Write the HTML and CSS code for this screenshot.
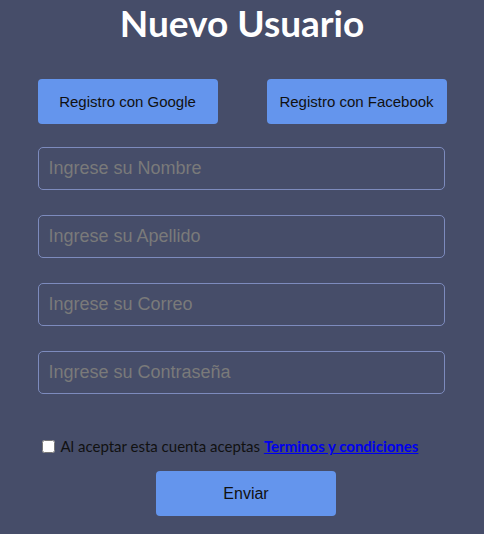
FILE: index.html
```html
<!DOCTYPE html>
<html lang="es">
<head>
<meta charset="utf-8">
<title>Nuevo Usuario</title>
<link rel="stylesheet" href="styles.css">
</head>
<body>
<main class="page">
  <h1 class="title">Nuevo Usuario</h1>
  <div class="social">
    <button class="btn">Registro con Google</button>
    <button class="btn">Registro con Facebook</button>
  </div>
  <form class="form">
    <input class="field" type="text" placeholder="Ingrese su Nombre">
    <input class="field" type="text" placeholder="Ingrese su Apellido">
    <input class="field" type="email" placeholder="Ingrese su Correo">
    <input class="field" type="password" placeholder="Ingrese su Contraseña">
    <label class="terms"><input class="check" type="checkbox">Al aceptar esta cuenta aceptas <a class="link" href="#">Terminos y condiciones</a></label>
    <button class="btn submit" type="button">Enviar</button>
  </form>
</main>
</body>
</html>
```
FILE: styles.css
```css
html, body {
  margin: 0;
  padding: 0;
  background: #464d69;
  height: 100%;
}
.page {
  width: 409px;
  margin: 0 auto;
  display: flex;
  flex-direction: column;
}
.title {
  margin: 0;
  padding-top: 1px;
  height: 45px;
  text-align: center;
  color: #ffffff;
  font-family: Lato, "Open Sans", sans-serif;
  font-weight: 700;
  font-size: 37px;
  line-height: 44px;
}
.social {
  display: flex;
  justify-content: space-between;
  margin-top: 33px;
}
.btn {
  width: 180px;
  height: 45px;
  border: none;
  border-radius: 4px;
  background: #6495ed;
  color: #111111;
  font-family: "Liberation Sans", Arial, sans-serif;
  font-size: 15px;
  padding: 0;
}
.form {
  display: flex;
  flex-direction: column;
  margin-top: 23px;
}
.field {
  box-sizing: border-box;
  width: 407px;
  height: 43px;
  margin-bottom: 25px;
  padding: 0 10px;
  background: transparent;
  border: 1px solid #7d8bbd;
  border-radius: 5px;
  font-family: "Liberation Sans", Arial, sans-serif;
  font-size: 18px;
  color: #dddddd;
}
.field::placeholder {
  color: #7a7a7a;
}
.terms {
  margin-top: 18px;
  padding-left: 4px;
  display: flex;
  align-items: center;
  font-family: Lato, "Open Sans", sans-serif;
  font-size: 15px;
  color: #111111;
  white-space: pre;
}
.check {
  margin: 0 6px 0 0;
  width: 13px;
  height: 13px;
}
.link {
  color: #0000ee;
  font-weight: 700;
  text-decoration: underline;
}
.submit {
  align-self: center;
  margin-top: 16px;
  margin-left: 8px;
  font-size: 16px;
}
```
